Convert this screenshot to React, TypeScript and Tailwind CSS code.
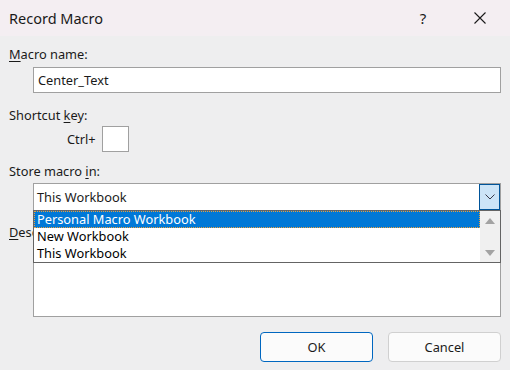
import React from "react";

const U = ({ children }: { children: React.ReactNode }) => (
  <span className="underline underline-offset-[2px] decoration-1">{children}</span>
);

export default function App() {
  return (
    <div
      className="w-[510px] h-[370px] bg-[#eeeeef] relative overflow-hidden text-[12.8px] text-[#1a1a1a] flex flex-col"
      style={{ fontFamily: '"Noto Sans", "Open Sans", sans-serif' }}
    >
      {/* Title bar */}
      <div className="h-[36px] bg-[#f4eef2] flex items-center pl-[9px] shrink-0">
        <span className="text-[14.5px] text-[#1a1a1a] leading-none">Record Macro</span>
        <div className="flex-1" />
        <span className="text-[15px] leading-none w-[12px] mr-[45px] text-center">?</span>
        <svg width="12" height="12" viewBox="0 0 12 12" className="mr-[24px]">
          <path d="M0.5 0.5 L11.5 11.5 M11.5 0.5 L0.5 11.5" stroke="#1a1a1a" strokeWidth="1.1" />
        </svg>
      </div>

      {/* Body */}
      <div className="flex flex-col pl-[9px] pr-[9px] relative flex-1">
        <div className="mt-[10px] leading-[17px]">
          <U>M</U>acro name:
        </div>
        <div className="ml-[24px] mt-[4px] h-[26px] border border-[#a0a0a0] bg-white flex items-center pl-[4px] leading-none">
          Center_Text
        </div>

        <div className="mt-[14px] leading-[17px]">
          Shortcut <U>k</U>ey:
        </div>
        <div className="flex items-center mt-[2px] ml-[58px] gap-[6px]">
          <span className="leading-none">Ctrl+</span>
          <div className="w-[27px] h-[26px] border border-[#a0a0a0] bg-white" />
        </div>

        <div className="mt-[11px] leading-[17px]">
          Store macro <U>i</U>n:
        </div>
        <div className="ml-[24px] mt-[3px] h-[28px] border border-[#a0a0a0] bg-white flex items-stretch">
          <div className="flex-1 flex items-center pl-[3px] leading-none">This Workbook</div>
          <div className="w-[21px] bg-[#cce4f7] border border-[#005499] flex items-center justify-center">
            <svg width="10" height="6" viewBox="0 0 10 6">
              <path d="M0.5 0.5 L5 5 L9.5 0.5" fill="none" stroke="#3a3a4a" strokeWidth="1" />
            </svg>
          </div>
        </div>

        <div className="mt-[13px] leading-[17px] w-[24px] overflow-hidden whitespace-nowrap">
          <U>D</U>escription:
        </div>
        <div className="ml-[24px] mt-[3px] h-[73px] border border-[#a0a0a0] bg-white" />

        <div className="flex justify-end gap-[15px] mt-[15px]">
          <button className="w-[113px] h-[30px] rounded-[4px] border border-[#0067c0] bg-[#fbfbfb] text-[12.8px] text-[#1a1a1a] leading-none">
            OK
          </button>
          <button className="w-[113px] h-[30px] rounded-[4px] border border-[#d0d0d0] bg-[#fbfbfb] text-[12.8px] text-[#1a1a1a] leading-none">
            Cancel
          </button>
        </div>

        {/* Dropdown list overlay */}
        <div className="absolute left-[33px] top-[174px] w-[468px] h-[53px] border border-[#646464] bg-white flex">
          <div className="flex-1 flex flex-col">
            <div className="h-[17px] bg-[#0078d7] text-white border border-dotted border-[#e8a040] flex items-center pl-[2px] leading-none">
              Personal Macro Workbook
            </div>
            <div className="h-[17px] flex items-center pl-[3px] text-black leading-none">New Workbook</div>
            <div className="h-[17px] flex items-center pl-[3px] text-black leading-none">This Workbook</div>
          </div>
          <div className="w-[20px] bg-[#f0f0f0] flex flex-col items-center justify-between pt-[7px] pb-[6px]">
            <svg width="10" height="6" viewBox="0 0 10 6">
              <path d="M0 6 L5 0 L10 6 Z" fill="#a3a3a3" />
            </svg>
            <svg width="10" height="6" viewBox="0 0 10 6">
              <path d="M0 0 L5 6 L10 0 Z" fill="#a3a3a3" />
            </svg>
          </div>
        </div>
      </div>
    </div>
  );
}
